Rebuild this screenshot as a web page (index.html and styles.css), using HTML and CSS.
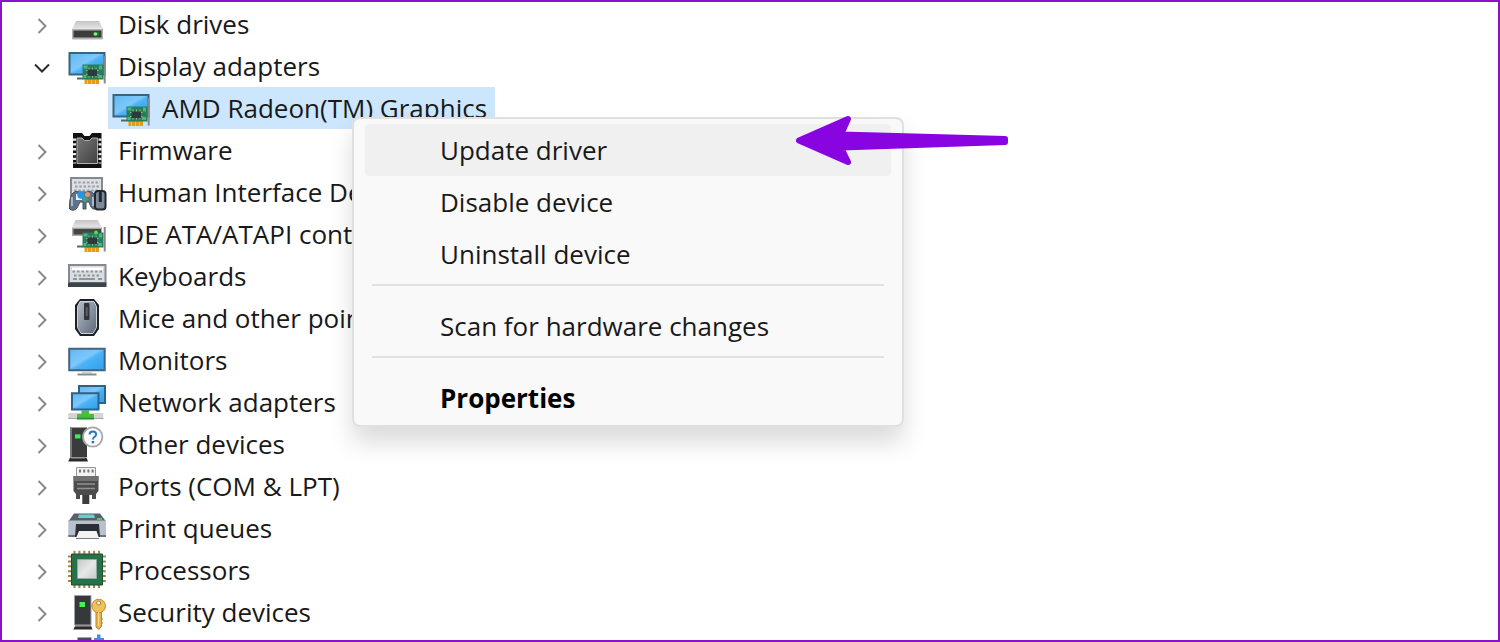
FILE: index.html
```html
<!DOCTYPE html>
<html lang="en">
<head>
<meta charset="utf-8">
<title>Device Manager</title>
<link rel="stylesheet" href="styles.css">
</head>
<body>
<svg class="defs" aria-hidden="true">
  <defs>
    <linearGradient id="screen" x1="0" y1="0" x2="1" y2="1"><stop offset="0" stop-color="#62b6f2"/><stop offset=".45" stop-color="#7cc8fb"/><stop offset=".55" stop-color="#4db2f6"/><stop offset="1" stop-color="#2ba0ee"/></linearGradient>
    <linearGradient id="metal" x1="0" y1="0" x2="0" y2="1"><stop offset="0" stop-color="#c4c4c4"/><stop offset="1" stop-color="#e6e6e6"/></linearGradient>
    <linearGradient id="dark" x1="0" y1="0" x2="1" y2="1"><stop offset="0" stop-color="#787878"/><stop offset="1" stop-color="#3f3f3f"/></linearGradient>
    <linearGradient id="steel" x1="0" y1="0" x2="1" y2="1"><stop offset="0" stop-color="#b5bdc8"/><stop offset="1" stop-color="#5c6878"/></linearGradient>
    <linearGradient id="silver" x1="0" y1="0" x2="1" y2="1"><stop offset="0" stop-color="#c3c6c5"/><stop offset=".5" stop-color="#e6e8e7"/><stop offset="1" stop-color="#c8cbca"/></linearGradient>
    <symbol id="card" viewBox="0 0 42 42">
      <path d="M11 31.5h6" stroke="#5d6468" stroke-width="2"/>
      <path d="M38.700 12v24.500" stroke="#85898e" stroke-width="2"/>
      <path d="M18.500 32h14.500v5H18.500z" fill="#e79a12"/>
      <path d="M21.500 33v4M25.500 33v4M29.500 33v4" stroke="#f7c34c" stroke-width="1"/>
      <path d="M16.500 17.500h21v15h-21z" fill="#25805a"/>
      <path d="M17.500 18.500h4v3h-4zM33 18.500h3v4h-3zM17.500 28h3v3h-3zM32 28h4v3h-4z" fill="#54b183"/>
      <path d="M23 20.500v10M26.500 20.500v10M30 20.500v10M20 23.500h12.500M20 27.500h12.500" stroke="#8fb9a0" stroke-width="1"/>
      <path d="M21.500 22.500h9.500v6.500h-9.500z" fill="#2b3b38"/>
    </symbol>
    <symbol id="display" viewBox="0 0 42 42">
      <path d="M3.500 6h35v21.500h-35z" fill="url(#screen)" stroke="#39647f" stroke-width="2"/>
      <path d="M38.700 9v10" stroke="#85898e" stroke-width="2"/>
      <use href="#card"/>
    </symbol>
    <symbol id="right" viewBox="0 0 16 16"><path d="M4.500 1l7 7-7 7" fill="none" stroke="#8a8a8a" stroke-width="2"/></symbol>
    <symbol id="down" viewBox="0 0 16 16"><path d="M1 4.500l7 7 7-7" fill="none" stroke="#2d2d2d" stroke-width="2"/></symbol>
  </defs>
</svg>
<main class="window">
  <ul class="tree">
    <li class="row"><button class="toggle" aria-label="Expand Disk drives"><svg class="chevron"><use href="#right"/></svg></button>
      <svg class="icon" viewBox="0 0 42 42"><path d="M10 16h23l4 8H6z" fill="url(#metal)"/><path d="M6 24h31v9.500q0 1-1 1H7q-1 0-1-1z" fill="#b3b3b3"/><path d="M7.500 25.500h28v7h-28z" fill="#3c3c3c"/><path d="M27 29h6" stroke="#2f7d38" stroke-width="3"/><circle cx="29.500" cy="29" r="1.700" fill="#6dff6d"/></svg>
      <span class="label">Disk drives</span></li>
    <li class="row"><button class="toggle" aria-label="Collapse Display adapters" aria-expanded="true"><svg class="chevron"><use href="#down"/></svg></button>
      <svg class="icon"><use href="#display"/></svg>
      <span class="label">Display adapters</span></li>
    <li class="row row-child"><span class="selected"><svg class="icon"><use href="#display"/></svg>
      <span class="label">AMD Radeon(TM) Graphics</span></span></li>
    <li class="row"><button class="toggle" aria-label="Expand Firmware"><svg class="chevron"><use href="#right"/></svg></button>
      <svg class="icon" viewBox="0 0 42 42"><path d="M7 2h9l2.500 3h5L26 2h9.500v35H7z" fill="#111"/><path d="M8.500 7.500v25M34 7.500v25" stroke="#e9e9e9" stroke-width="3" stroke-dasharray="2.300 2.500"/><path d="M11 7h5l2.500 2.500h5L26 7h5.500v25.500H11z" fill="url(#dark)" stroke="#b0b0b0"/></svg>
      <span class="label">Firmware</span></li>
    <li class="row"><button class="toggle" aria-label="Expand Human Interface Devices"><svg class="chevron"><use href="#right"/></svg></button>
      <svg class="icon" viewBox="0 0 42 42"><path d="M5 5h31v18H5z" fill="#dcdfe3" stroke="#84898f" stroke-width="2"/><path d="M8 9.500h26M9 13.500h25M8 17.500h26" stroke="#9b9fa5" stroke-width="2" stroke-dasharray="2.500 1.800"/><path d="M7 20q3-3 6-1h8q4-2 6 1 3 4 3.500 15-4 3-6-2l-1.500-4h-3v7h-3v-7h-3l-3 6q-3 4-7.500 1-.500-12 3.500-16z" fill="#5f7288" stroke="#44515f"/><path d="M6 24v9M27 24v9" stroke="#a8b8c8" stroke-width="2"/><path d="M10 21h6v6h-6z" fill="#e9f3fb"/><circle cx="15" cy="22" r="3.700" fill="#2794df"/><circle cx="21.500" cy="21.500" r="2.500" fill="#e09a68"/><circle cx="19" cy="26.500" r="2.500" fill="#4a9c74"/><rect x="29" y="18" width="10.500" height="18.500" rx="3" fill="#7c8996" stroke="#202830" stroke-width="2"/><path d="M34.300 19v10" stroke="#202830" stroke-width="3"/></svg>
      <span class="label">Human Interface Devices</span></li>
    <li class="row"><button class="toggle" aria-label="Expand IDE ATA/ATAPI controllers"><svg class="chevron"><use href="#right"/></svg></button>
      <svg class="icon" viewBox="0 0 42 42"><path d="M9.500 5h22l4.500 7.500H6z" fill="url(#metal)"/><path d="M6 12.500h30v8.500H6z" fill="#a8a8a8"/><path d="M7.500 14h27.500v5.500H7.500z" fill="#454545"/><use href="#card"/><circle cx="30" cy="17.500" r="2" fill="#4be04b"/></svg>
      <span class="label">IDE ATA/ATAPI controllers</span></li>
    <li class="row"><button class="toggle" aria-label="Expand Keyboards"><svg class="chevron"><use href="#right"/></svg></button>
      <svg class="icon" viewBox="0 0 42 42"><path d="M3 8h36.500v18H3z" fill="#dadcdf" stroke="#858a90" stroke-width="2"/><path d="M2 25.500h38.500v4.500H2z" fill="#3b444d"/><path d="M6 12h31" stroke="#fff" stroke-width="3"/><path d="M6.500 14.500h30M8 18.500h27" stroke="#8f949b" stroke-width="2" stroke-dasharray="2.500 2"/><path d="M7 22h4M13 22h16M32 22h4" stroke="#8f949b" stroke-width="2"/></svg>
      <span class="label">Keyboards</span></li>
    <li class="row"><button class="toggle" aria-label="Expand Mice and other pointing devices"><svg class="chevron"><use href="#right"/></svg></button>
      <svg class="icon" viewBox="0 0 42 42"><path d="M14 0h14l5 6v24l-5 7H14l-5-7V6z" fill="#1d2024"/><path d="M14 2.500h14l2.500 5v21L27 34.500H15L11.500 28.500v-21z" fill="url(#steel)" stroke="#cbd2da"/><rect x="18" y="4" width="5.500" height="17" rx="1" fill="#30353b"/><path d="M20.700 8v9" stroke="#59616a" stroke-width="2"/></svg>
      <span class="label">Mice and other pointing devices</span></li>
    <li class="row"><button class="toggle" aria-label="Expand Monitors"><svg class="chevron"><use href="#right"/></svg></button>
      <svg class="icon" viewBox="0 0 42 42"><path d="M3.200 7.700h35.500v21.500H3.200z" fill="url(#screen)" stroke="#41657e" stroke-width="2"/><path d="M16 30h10v2.500H16z" fill="#d0d3d6"/><path d="M11.500 33.500h19" stroke="#858c93" stroke-width="2"/></svg>
      <span class="label">Monitors</span></li>
    <li class="row"><button class="toggle" aria-label="Expand Network adapters"><svg class="chevron"><use href="#right"/></svg></button>
      <svg class="icon" viewBox="0 0 42 42"><path d="M13 3h26v17H13z" fill="url(#screen)" stroke="#2d6284" stroke-width="2"/><path d="M2.300 30h35v6h-35z" fill="#d4d6d4"/><path d="M2.300 35.500h35" stroke="#a4a8a4"/><path d="M15.500 27.500h7.500V31h5v5.500H11V31h4.500z" fill="#45bd47"/><path d="M11 35.500h17" stroke="#2c8f32" stroke-width="1.500"/><path d="M6 10.300h26.500v16.200H6z" fill="url(#screen)" stroke="#2d6284" stroke-width="2"/></svg>
      <span class="label">Network adapters</span></li>
    <li class="row"><button class="toggle" aria-label="Expand Other devices"><svg class="chevron"><use href="#right"/></svg></button>
      <svg class="icon" viewBox="0 0 42 42"><path d="M4 2.500h17V32H4z" fill="#393b3c"/><path d="M4 2.500h2V32H4z" fill="#77797a"/><path d="M4 32.500h16.500l1.500 4H2.300z" fill="#2a2a2a"/><path d="M5 33h14" stroke="#999"/><path d="M9 9.300h5.500v4.200H9z" fill="#3cf045"/><circle cx="26.700" cy="12" r="9.700" fill="#fafafa" stroke="#a5a8aa" stroke-width="1.800"/><path d="M23.600 9.500q0-3 3.300-3 3.200 0 3.200 2.800 0 1.600-1.700 2.700-1.500 1-1.500 2.500" fill="none" stroke="#2878b8" stroke-width="2"/><path d="M25.700 16h2.500v2.300h-2.500z" fill="#2878b8"/></svg>
      <span class="label">Other devices</span></li>
    <li class="row"><button class="toggle" aria-label="Expand Ports (COM &amp; LPT)"><svg class="chevron"><use href="#right"/></svg></button>
      <svg class="icon" viewBox="0 0 42 42"><path d="M10.500.5h19v10h-19z" fill="#f2f2f2" stroke="#969696"/><path d="M13 4h15" stroke="#777" stroke-width="3" stroke-dasharray="2 2.200"/><path d="M16.300 26h7v11h-7z" fill="#3d3d3d"/><path d="M7.500 9h25v15l-2.500 3v5h-4v-4H14v4h-4v-5l-2.500-3z" fill="#4c4c4c"/><path d="M7.500 9h25v5h-25z" fill="#707070"/><path d="M11 17h18M11 21.500h18" stroke="#919191" stroke-width="1.500"/></svg>
      <span class="label">Ports (COM &amp; LPT)</span></li>
    <li class="row"><button class="toggle" aria-label="Expand Print queues"><svg class="chevron"><use href="#right"/></svg></button>
      <svg class="icon" viewBox="0 0 42 42"><path d="M8 4.500h26l6 8H2.300z" fill="#596168"/><path d="M13 5.500h15l1 3.500H12z" fill="#63d5c8"/><path d="M31 9h5v2h-5z" fill="#39d94b"/><path d="M2.300 11.500H40v16H2.300z" fill="#b9c1cc"/><path d="M2.300 27H40" stroke="#69727e" stroke-width="2"/><path d="M10 15h23l1 13H9z" fill="#2a2f35"/><path d="M13 22h17.500l2.500 7H10z" fill="#f2f2f2"/><path d="M10 29.500h23" stroke="#7d7d7d"/></svg>
      <span class="label">Print queues</span></li>
    <li class="row"><button class="toggle" aria-label="Expand Processors"><svg class="chevron"><use href="#right"/></svg></button>
      <svg class="icon" viewBox="0 0 42 42"><path d="M7.500 1.200h28M7.500 35.500h28M3.500 4.500v28M38.300 4.500v28" stroke="#a38444" stroke-width="3" stroke-dasharray="2 2.900"/><path d="M5.500 3h31v31h-31z" fill="#26704a" stroke="#174f32"/><path d="M11.500 8.500h19v19h-19z" fill="url(#silver)" stroke="#8fae9e"/></svg>
      <span class="label">Processors</span></li>
    <li class="row"><button class="toggle" aria-label="Expand Security devices"><svg class="chevron"><use href="#right"/></svg></button>
      <svg class="icon" viewBox="0 0 42 42"><path d="M8.500 2.500h16.500V32H8.500z" fill="#36383b" stroke="#a0a2a4"/><path d="M7.300 36.500l2-4H25l1.500 4z" fill="#29292b"/><path d="M9 33h16" stroke="#aaa"/><path d="M13.500 9h5.500v5h-5.500z" fill="#4cf04c"/><path d="M30 18h5.500v15L33 36.500 30 34z" fill="#e6b248" stroke="#bd8425"/><path d="M35 25h1.500v2H35zM35 29h1.500v2H35z" fill="#bd8425"/><circle cx="32.700" cy="13" r="6.800" fill="#efc15c" stroke="#c48b2b"/><circle cx="32.700" cy="10" r="2" fill="#fff" stroke="#b17d28"/><path d="M32.700 19v14" stroke="#ffe19a"/></svg>
      <span class="label">Security devices</span></li>
    <li class="row" aria-label="Software components">
      <span class="toggle"></span>
      <svg class="icon" viewBox="0 0 42 42"><path d="M11.500 2.500h14V20h-14z" fill="#4c4c56"/><path d="M28 3h3V-.500h3.500V3H38v4H28z" fill="#438de0"/></svg></li>
  </ul>
  <div class="menu" role="menu">
    <button class="item item-active" role="menuitem">Update driver</button>
    <button class="item" role="menuitem">Disable device</button>
    <button class="item" role="menuitem">Uninstall device</button>
    <hr class="divider">
    <button class="item" role="menuitem">Scan for hardware changes</button>
    <hr class="divider">
    <button class="item item-default" role="menuitem">Properties</button>
  </div>
  <svg class="arrow" viewBox="0 0 214 52" aria-hidden="true"><path d="M4 25.500L53 4 46 19.500 210 24v3L46 32.500 53 47z" fill="#8804e0" stroke="#8804e0" stroke-width="6" stroke-linejoin="round"/></svg>
</main>
</body>
</html>
```
FILE: styles.css
```css
* { box-sizing: border-box; }

body {
  margin: 0;
  background: #fff;
  color: #191919;
  font-family: "Open Sans", "Noto Sans", sans-serif;
  font-size: 26px;
}

button {
  margin: 0;
  border: 0;
  background: none;
  color: inherit;
  font: inherit;
}

.defs {
  position: absolute;
  width: 0;
  height: 0;
}

.window {
  position: relative;
  height: 100vh;
  overflow: hidden;
  border: 2px solid #8a12cc;
}

.tree {
  margin: 0;
  padding: 1px 0 0 32px;
  list-style: none;
}

.row {
  display: flex;
  align-items: center;
  height: 42px;
}

.row-child { padding-left: 74px; }

.toggle {
  display: flex;
  width: 32px;
  padding: 4px 0 0;
}

.chevron {
  width: 16px;
  height: 16px;
}

.icon {
  flex: none;
  width: 42px;
  height: 42px;
  margin: 2px 0 -2px;
  overflow: visible;
}

.label {
  margin-left: 10px;
  line-height: 42px;
  white-space: nowrap;
}

.selected {
  display: flex;
  padding: 0 8px 0 2px;
  background: #cce6fe;
}

.menu {
  position: absolute;
  top: 115px;
  left: 350px;
  padding: 5px 11px 1px;
  border: 2px solid #e0e0e0;
  border-radius: 8px;
  width: 552px;
  background: #f9f9f9;
  box-shadow: 0 16px 24px rgba(0, 0, 0, .14);
}

.item {
  display: block;
  width: 100%;
  height: 52px;
  padding: 0 0 0 75px;
  border-radius: 4px;
  line-height: 52px;
  text-align: left;
}

.item-active { background: #f0f0f0; }

.item-default {
  color: #000;
  font-weight: 700;
}

.divider {
  height: 2px;
  margin: 4px 7px 14px;
  border: 0;
  background: #e2e2e2;
}

.arrow {
  position: absolute;
  top: 113px;
  left: 793px;
  width: 214px;
  height: 52px;
}
```
